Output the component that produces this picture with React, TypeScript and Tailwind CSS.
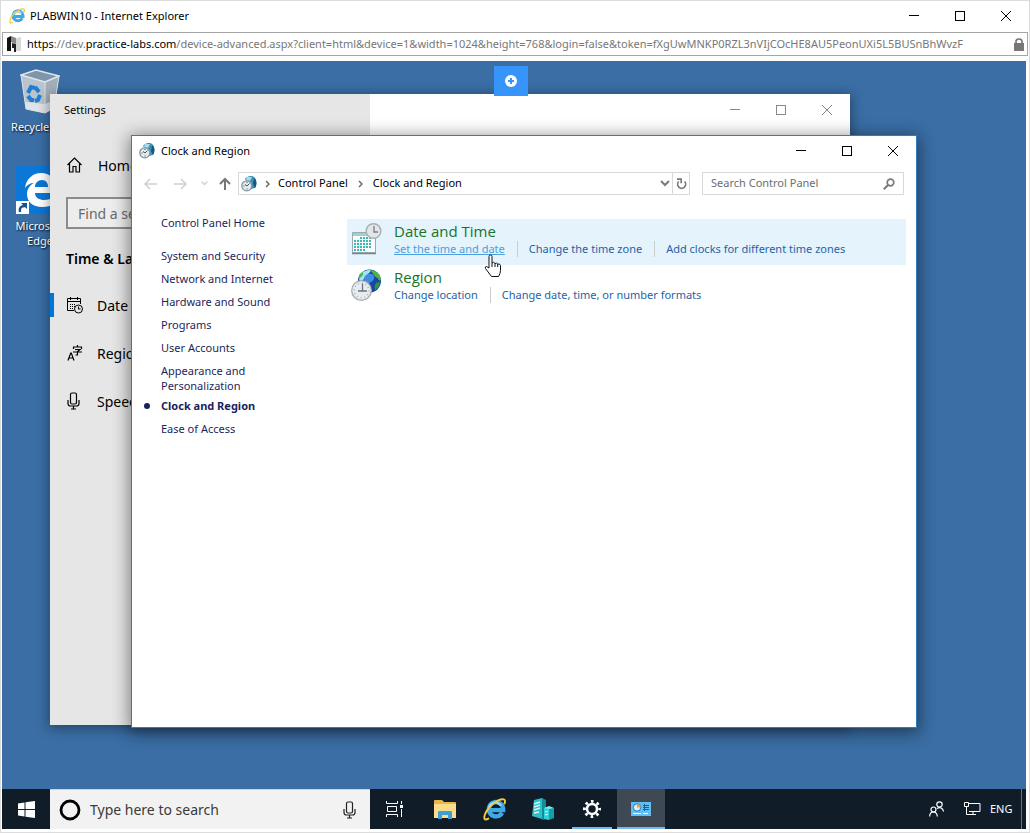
/**
 * Remote desktop session shown inside a browser window
 */

import type { ReactNode } from 'react'
import clsx from 'clsx'

function CaptionButtons({ className }: { className?: string }) {
  return (
    <div className={clsx('flex self-stretch', className)}>
      <button aria-label="Minimize" className="flex w-[46px] items-center justify-center">
        <svg width="10" height="10" shapeRendering="crispEdges" fill="none" stroke="currentColor">
          <path d="M0 4.500h10" />
        </svg>
      </button>
      <button aria-label="Maximize" className="flex w-[46px] items-center justify-center">
        <svg width="10" height="10" shapeRendering="crispEdges" fill="none" stroke="currentColor">
          <path d="M.5 .5h9v9h-9z" />
        </svg>
      </button>
      <button aria-label="Close" className="flex w-[46px] items-center justify-center">
        <svg width="10" height="10" fill="none" stroke="currentColor">
          <path d="M0 0l10 10M10 0L0 10" />
        </svg>
      </button>
    </div>
  )
}

function ExplorerLogo({ size }: { size: number }) {
  return (
    <svg width={size} height={size} viewBox="0 0 24 24" fill="none">
      <path d="M20 15.5a7.500 7.500 0 1 1 1-4.500v1.700H8" stroke="#3fa9e8" strokeWidth="4.500" />
      <path d="M6 9.500A7.500 7.500 0 0 1 19 8" stroke="#9adcf8" strokeWidth="2" />
      <path
        d="M5.500 21.500C.8 24.400 0 20 3.600 13.800 7.500 7.200 17 .2 21.600 1.400c1.700.5 1.700 2.400.8 4.400"
        stroke="#f3cb3c"
        strokeWidth="2"
        strokeLinecap="round"
      />
    </svg>
  )
}

function RecycleBin() {
  return (
    <svg width="40" height="46" viewBox="0 0 40 46" fill="none">
      <path d="M1 6l5 34 19 4 9-5 5-32z" fill="#b9c4cd" />
      <path d="M25 13l14-6-5 32-9 5z" fill="#a3b0bb" />
      <path d="M5 33l20 2 10-4-1 8-9 5-19-4z" fill="#dfe4e8" />
      <path d="M1 6L16 1l23 6-14 6z" fill="#7f96aa" stroke="#dfe6eb" strokeWidth="1.500" />
      <path d="M1 6l5 34 19 4V13M39 7l-5 32-9 5" stroke="#dbe2e8" />
      <g stroke="#1e7fd2" strokeWidth="4">
        <path d="M8 24l3-6 4 1" />
        <path d="M15 18l4 5" />
        <path d="M8 27l3 4h3" />
        <path d="M20 26l-2 5-3 1" />
      </g>
    </svg>
  )
}

function EdgeLogo() {
  return (
    <svg width="48" height="48" viewBox="0 0 48 48">
      <path fill="#0b78d7" d="M0 0h48v48H0z" />
      <path
        fill="#fff"
        d="M9 22C10 13 17 7 25 7c10 0 15 7 15 15v5H19c0 5 5 7 9 7 4 0 7-1 10-3v7c-3 2-7 3-12 3-9 0-15-5-15-13 0-5 3-9 7-11-4 0-7 2-9 5zm10-1h13c0-4-2-7-6-7s-7 3-7 7z"
      />
      <path fill="#fff" d="M0 35h13v13H0z" />
      <path fill="none" stroke="#1d4f96" strokeWidth="2.500" d="M4 46c-1-4 1-6 5-6" />
      <path fill="#1d4f96" d="M5 37h6v6z" />
    </svg>
  )
}

// Globe half hidden behind a clock face
function ClockGlobe() {
  return (
    <svg width="32" height="33" viewBox="0 0 32 33" fill="none">
      <circle cx="18.500" cy="12" r="11.500" fill="#1a46a0" />
      <path d="M8 8c2-5 6-7 11-7 2 1-1 3-3 5-2 1-3 6-6 6-2 0-2-2-2-4z" fill="#9fe3f8" />
      <path d="M14 7c3-3 8-3 9 0s-2 7-6 7c-3 0-5-4-3-7z" fill="#3f8be6" />
      <path d="M19 1c6 0 10 4 11 9-1 3-3 1-3-1-3 0-4-4-8-8zM8 6l4-3v3l-4 4z" fill="#4cb648" />
      <path d="M25 14c2-1 4-1 4 0-1 4-3 6-5 7-1-3 0-5 1-7z" fill="#2f9447" />
      <circle cx="10.500" cy="21.500" r="9.800" fill="#e9ecef" stroke="#a7aeb4" strokeWidth="1.300" />
      <circle cx="10.500" cy="21.500" r="7.300" stroke="#aab1b7" strokeWidth="1.500" strokeDasharray="1 2.822" />
      <path d="M11.500 14.500V22.500M7 22h9" stroke="#6a747c" strokeWidth="1.300" />
    </svg>
  )
}

// Small version used in the title and address bars
function ClockGlobeSmall() {
  return (
    <svg width="16" height="16" viewBox="0 0 16 16" fill="none">
      <path d="M4 3c2-3 7-4 9-2 3 2 3 8 1 11l-4 1z" fill="#3a93b5" />
      <path d="M6 1h5L9 5 5 4z" fill="#a9dcea" />
      <path d="M13 2c3 2 3 7 1 10l-2-4z" fill="#1f527e" />
      <circle cx="5.800" cy="9.800" r="5" fill="#e4eaed" stroke="#8496a0" strokeWidth="1.300" />
      <path d="M6 10l2.500-2.500M6 10L4 8.500M6 12.500v1M2.500 10h1M6 6v1" stroke="#44525c" />
    </svg>
  )
}

function CalendarClock() {
  return (
    <svg width="32" height="32" viewBox="0 0 32 32" fill="none">
      <path d="M1.500 9.500h23v20h-23z" fill="#fbfdfd" stroke="#9aabb0" />
      <path d="M2 10h22v3H2z" fill="#9fcfd2" />
      <path d="M1 30.500h24" stroke="#77888d" strokeWidth="1.500" />
      <path
        d="M9 15h12M3 18h18M3 21h18M3 24h18M3 27h12"
        stroke="#3cb9b3"
        strokeWidth="2"
        strokeDasharray="2 1"
      />
      <circle cx="22.500" cy="8" r="7.300" fill="#e3e6e9" stroke="#a9aeb3" strokeWidth="1.400" />
      <path d="M23 3v6h4" stroke="#7a838a" strokeWidth="1.400" />
    </svg>
  )
}

function Chevron() {
  return (
    <svg width="5" height="8" viewBox="0 0 5 8" fill="none" stroke="#6b6b6b" strokeWidth="1.500">
      <path d="M1 1l3 3-3 3" />
    </svg>
  )
}

function Microphone() {
  return (
    <svg width="13" height="18" viewBox="0 0 13 18" fill="none" stroke="currentColor" strokeWidth="1.200">
      <rect x="3.500" y="1" width="6" height="11" rx="1.500" />
      <path d="M1 8v3.500Q1 14 3.500 14h6Q12 14 12 11.500V8M6.500 14v3M4 17h5" />
    </svg>
  )
}

function DesktopIcon({ icon, label }: { icon: ReactNode; label: string }) {
  return (
    <button className="flex w-[76px] flex-col items-center text-[11px] leading-[15px] text-white [text-shadow:1px_1px_2px_#000]">
      {icon}
      <span className="mt-1 text-center">{label}</span>
    </button>
  )
}

const settingsItems = [
  {
    label: 'Date & time',
    active: true,
    icon: (
      <svg width="16" height="17" viewBox="0 0 16 17" fill="none" stroke="currentColor">
        <path d="M7 13.500H.5v-12h13V7M.5 4.500h13M3.500 0v3M10.500 0v3" />
        <path d="M3 7.500h6M3 9.500h5M3 11.500h4" strokeDasharray="1 1" />
        <circle cx="11.500" cy="12" r="4" />
        <path d="M11.500 9.500V12h2" />
      </svg>
    ),
  },
  {
    label: 'Region & language',
    active: false,
    icon: (
      <svg width="16" height="17" viewBox="0 0 16 17" fill="none" stroke="currentColor" strokeWidth="1.200">
        <path d="M1 15.500L3.700 8h.6L7 15.500M2 13h4" />
        <path d="M10.500 0v2M6.500 4V2h8v2M8 4.500h5l-2.500 2V10H8.500M6 7h9" />
      </svg>
    ),
  },
  { label: 'Speech', active: false, icon: <Microphone /> },
]

function SettingsWindow() {
  return (
    <section className="absolute top-[33px] left-12 flex h-[631px] w-[800px] bg-white shadow-[0_2px_12px_1px_rgba(0,0,0,0.4)]">
      <div className="w-80 shrink-0 bg-[#e6e6e6]">
        <h2 className="flex h-8 items-center pl-[14px]">Settings</h2>
        <a href="#home" className="mt-[15px] flex h-12 items-center gap-4 pl-[17px] text-[14px]">
          <svg width="15" height="16" viewBox="0 0 15 16" fill="none" stroke="currentColor" strokeWidth="1.200">
            <path d="M.5 8L7.500 1l7 7M2.500 6.500V15h3.500V9.500h3V15h3.500V6.500" />
          </svg>
          Home
        </a>
        <input
          aria-label="Find a setting"
          placeholder="Find a setting"
          className="mt-2 ml-4 block h-8 w-72 border-2 border-[#8c8c8c] bg-[#ededed] px-[10px] text-[14px] placeholder:text-[#6a6a6a]"
        />
        <h3 className="mt-[18px] pl-4 text-[14px] leading-6 font-semibold">Time &amp; Language</h3>
        <ul className="mt-[10px]">
          {settingsItems.map((item) => (
            <li key={item.label}>
              <a href="#setting" className="flex h-12 items-center text-[14px]">
                <span className={clsx('h-6 w-1', item.active && 'bg-[#0078d7]')} />
                <span className="flex w-[43px] items-center pl-[13px]">{item.icon}</span>
                {item.label}
              </a>
            </li>
          ))}
        </ul>
      </div>
      <div className="flex h-8 flex-1 justify-end">
        <CaptionButtons className="text-[#888]" />
      </div>
    </section>
  )
}

const categories = [
  'System and Security',
  'Network and Internet',
  'Hardware and Sound',
  'Programs',
  'User Accounts',
  'Appearance and Personalization',
]

const groups = [
  {
    title: 'Date and Time',
    icon: <CalendarClock />,
    links: ['Set the time and date', 'Change the time zone', 'Add clocks for different time zones'],
    hovered: true,
  },
  {
    title: 'Region',
    icon: <ClockGlobe />,
    links: ['Change location', 'Change date, time, or number formats'],
    hovered: false,
  },
]

function ControlPanelWindow() {
  return (
    <section className="absolute top-[74px] left-[129px] flex h-[593px] w-[786px] flex-col border border-[#2f7cc0] bg-white shadow-[0_3px_16px_2px_rgba(0,0,0,0.45)]">
      <div className="flex h-[30px] items-center pl-[7px]">
        <ClockGlobeSmall />
        <h2 className="flex-1 pl-[6px]">Clock and Region</h2>
        <CaptionButtons />
      </div>

      {/* Navigation bar */}
      <div className="mt-[6px] flex h-[23px] items-center px-3">
        <button aria-label="Back" className="flex w-[30px]">
          <svg width="13" height="12" viewBox="0 0 13 12" fill="none" stroke="#d0d0d0" strokeWidth="1.500">
            <path d="M13 6H1.500M6 1L1 6l5 5" />
          </svg>
        </button>
        <button aria-label="Forward" className="flex w-[27px]">
          <svg width="13" height="12" viewBox="0 0 13 12" fill="none" stroke="#d0d0d0" strokeWidth="1.500">
            <path d="M0 6h11.500M7 1l5 5-5 5" />
          </svg>
        </button>
        <button aria-label="Recent locations" className="flex w-[18px]">
          <svg width="7" height="5" viewBox="0 0 7 5" fill="none" stroke="#d0d0d0" strokeWidth="1.300">
            <path d="M.5 .5l3 3 3-3" />
          </svg>
        </button>
        <button aria-label="Up" className="flex w-[19px]">
          <svg width="12" height="13" viewBox="0 0 12 13" fill="none" stroke="#777" strokeWidth="2">
            <path d="M6 13V2M1 7l5-5 5 5" />
          </svg>
        </button>
        <div className="flex h-full flex-1 items-center border border-[#d9d9d9] pl-[2px]">
          <ClockGlobeSmall />
          <span className="w-[21px] pl-2"><Chevron /></span>
          <a href="#control-panel">Control Panel</a>
          <span className="w-[25px] pl-[10px]"><Chevron /></span>
          <a href="#clock-and-region" className="flex-1">Clock and Region</a>
          <button aria-label="Previous locations" className="w-3">
            <svg width="10" height="7" viewBox="0 0 10 7" fill="none" stroke="#7a7a7a" strokeWidth="2">
              <path d="M1 1l4 4 4-4" />
            </svg>
          </button>
          <button aria-label="Refresh" className="flex h-full w-[17px] items-center justify-center border-l border-[#d9d9d9]">
            <svg width="11" height="12" viewBox="0 0 11 12" fill="none" stroke="#7a7a7a" strokeWidth="1.700">
              <path d="M8.500 3.500A4 4 0 1 1 2.800 3.500M1 1.200h4.200v4" />
            </svg>
          </button>
        </div>
        <div className="ml-3 flex h-full w-[202px] items-center border border-[#d9d9d9] px-2">
          <input
            aria-label="Search Control Panel"
            placeholder="Search Control Panel"
            className="min-w-0 flex-1 placeholder:text-[#6d6d6d]"
          />
          <svg width="12" height="12" viewBox="0 0 12 12" fill="none" stroke="#7a7a7a" strokeWidth="1.700">
            <circle cx="7.500" cy="4.500" r="3.300" />
            <path d="M5 7L.8 11.200" strokeWidth="2" />
          </svg>
        </div>
      </div>

      <div className="flex pt-6">
        <nav className="-mt-1 w-[215px] shrink-0 pr-14 pl-[29px] leading-[15px] text-[#1b1f5e]">
          <a href="#home" className="block">Control Panel Home</a>
          <ul className="mt-[18px] flex flex-col gap-2">
            {categories.map((name) => (
              <li key={name}>
                <a href="#category" className="block">{name}</a>
              </li>
            ))}
          </ul>
          <ul className="mt-[5px] flex flex-col gap-2">
            <li className="-ml-[17px] flex items-center gap-[11px] font-bold">
              <span className="size-[6px] rounded-full bg-[#1b1f5e]" />
              Clock and Region
            </li>
            <li><a href="#category">Ease of Access</a></li>
          </ul>
        </nav>

        <div className="mr-[10px] flex-1">
          {groups.map((group) => (
            <div
              key={group.title}
              className={clsx('flex h-[46px] items-start gap-[11px] pt-[2px] pl-1', group.hovered && 'bg-[#e5f3fd]')}
            >
              <span className="pt-[2px]">{group.icon}</span>
              <div>
                <h3 className="font-['Open_Sans',sans-serif] text-[15px] leading-5 text-[#187324]">
                  <a href="#group">{group.title}</a>
                </h3>
                <ul className="flex leading-4 text-[#1d63a8]">
                  {group.links.map((link, i) => (
                    <li
                      key={link}
                      className={clsx(i > 0 && 'ml-3 border-l border-[#ccc] pl-[11px]')}
                    >
                      <a
                        href="#task"
                        className={clsx(group.hovered && i === 0 && 'text-[#4a9fe0] underline')}
                      >
                        {link}
                      </a>
                    </li>
                  ))}
                </ul>
              </div>
            </div>
          ))}
        </div>
      </div>
    </section>
  )
}

function TaskButton({ label, className, children }: { label: string; className?: string; children: ReactNode }) {
  return (
    <button aria-label={label} className={clsx('flex w-12 items-center justify-center', className)}>
      {children}
    </button>
  )
}

function Taskbar() {
  return (
    <footer className="flex h-10 bg-[#101c28] text-white">
      <TaskButton label="Start">
        <svg width="17" height="17" viewBox="0 0 17 17" fill="currentColor">
          <path d="M0 2.500l6.500-1V8H0zM7.500 1.300L17 0v8H7.500zM0 9h6.500v6.500l-6.500-1zM7.500 9H17v8l-9.500-1.300z" />
        </svg>
      </TaskButton>
      <div className="flex w-80 items-center border-t border-[#c8d4e2] bg-[#f2f2f2] pr-[14px] pl-[9px] text-[#222]">
        <svg width="22" height="22" viewBox="0 0 22 22" fill="none">
          <circle cx="11" cy="11" r="9" stroke="#000" strokeWidth="2.800" />
        </svg>
        <input
          aria-label="Type here to search"
          placeholder="Type here to search"
          className="ml-[9px] min-w-0 flex-1 text-[14px] placeholder:text-[#3a3a3a]"
        />
        <Microphone />
      </div>
      <div className="flex gap-px">
        <TaskButton label="Task View">
          <svg width="17" height="16" viewBox="0 0 17 16" fill="none" stroke="currentColor">
            <path d="M.5 0v2.500h11V0M.5 16v-2.500h11V16M1.500 5.500h9v5h-9zM15.500 0v3M15.500 8v8" />
            <path d="M14 4h3v3h-3z" fill="currentColor" stroke="none" />
          </svg>
        </TaskButton>
        <TaskButton label="File Explorer" className="ml-[2px]">
          <svg width="22" height="19" viewBox="0 0 22 19">
            <path fill="#e9b84a" d="M0 1q0-1 1-1h7l2 2h11q1 0 1 1v4H0z" />
            <path fill="#fbdc8c" d="M0 4h22v14H0z" />
            <path fill="#3d9fd3" d="M4 19v-7q0-1 1-1h12q1 0 1 1v7h-4v-4H8v4z" />
          </svg>
        </TaskButton>
        <TaskButton label="Internet Explorer"><ExplorerLogo size={23} /></TaskButton>
        <TaskButton label="Server Manager">
          <svg width="22" height="22" viewBox="0 0 22 22">
            <path fill="#2cc0ca" d="M2 2l8-2v21l-10-3z" />
            <path fill="#0f8e9a" d="M10 0l4 2v19l-4 1z" />
            <path stroke="#d5f8f9" strokeWidth="1.500" d="M2 6l6-2M2 9l6-2M2 12l6-2M2 15l5-1" />
            <path fill="#2fd0d8" d="M12 10l5-1v13l-5-1z" />
            <path fill="#12a0ab" d="M17 9l5 1v10l-5 2z" />
            <path fill="#7be8ea" d="M12 10l5-2 5 2-5 1z" />
            <path stroke="#d9f9fa" d="M13 14l3-1M13 17l3-1" />
          </svg>
        </TaskButton>
        <TaskButton label="Settings" className="relative">
          <svg width="18" height="18" viewBox="0 0 18 18" fill="none" stroke="currentColor">
            <circle cx="9" cy="9" r="5" strokeWidth="2.500" />
            <circle cx="9" cy="9" r="7.600" strokeWidth="2.800" strokeDasharray="2.600 3.369" strokeDashoffset="1.300" />
          </svg>
          <span className="absolute inset-x-1 bottom-0 h-[2px] bg-[#76b9ed]" />
        </TaskButton>
        <TaskButton label="Control Panel" className="border-b-2 border-[#76b9ed] bg-[#3f4954] pt-[2px]">
          <svg width="20" height="14" viewBox="0 0 20 14" fill="none">
            <path fill="#62bdf0" d="M0 0h20v14H0z" />
            <circle cx="6" cy="5.500" r="3.700" fill="#d9f0fc" stroke="#2277b8" />
            <path fill="#e6a23c" d="M6 5.500V2a3.500 3.500 0 0 1 3.500 3.500z" />
            <path stroke="#1563a5" d="M12 3.500h6M12 5.500h6M12 7.500h6M13.500 2v7" />
            <path stroke="#fff" d="M2 11.500h8M12 11.500h5" />
          </svg>
        </TaskButton>
      </div>

      {/* Notification area */}
      <div className="ml-auto flex items-center">
        <svg width="15" height="16" viewBox="0 0 15 16" fill="none" stroke="currentColor" strokeWidth="1.200">
          <circle cx="10.500" cy="3.500" r="2.700" />
          <circle cx="4.500" cy="8.500" r="2.500" />
          <path d="M.7 15.500c0-6 7.600-6 7.600 0M8 7.500c3-2 6-.5 6.500 3" />
        </svg>
        <svg className="ml-5" width="17" height="14" viewBox="0 0 17 14" fill="none" stroke="currentColor">
          <path d="M5 1.500h11v8H5M.5 .5h4v4h-4zM2.500 4.500v8H12M9 9.500v3" />
        </svg>
        <span className="ml-[9px] w-6">ENG</span>
      </div>
      <button aria-label="Show desktop" className="ml-[7px] w-[5px] border-l border-[#6c747c]" />
    </footer>
  )
}

export default function App() {
  return (
    <div className="flex min-h-screen flex-col overflow-hidden border border-[#dcdcdc] bg-white font-['Noto_Sans','Open_Sans',sans-serif] text-[11px] text-black">
      {/* Browser title and address bars */}
      <header className="flex h-[30px] items-center pl-2">
        <ExplorerLogo size={16} />
        <h1 className="flex-1 pl-[5px]">PLABWIN10 - Internet Explorer</h1>
        <CaptionButtons />
      </header>
      <div className="mx-px mt-px flex h-6 items-center border border-[#a6a6a6] pr-[3px] pl-1">
        <svg className="shrink-0" width="15" height="16" viewBox="0 0 15 16">
          <path fill="#111" d="M0 2l4-2v15H0z" />
          <path fill="#d8d8d8" d="M9 2l5-1v14H9z" />
          <path fill="#222" d="M5 7l4 1v8H7v-4H5z" />
          <path fill="#888" d="M4 0l5 2v6L4 6z" />
        </svg>
        <div
          role="textbox"
          aria-label="Address"
          className="ml-[5px] min-w-0 flex-1 overflow-hidden whitespace-nowrap text-[#777]"
        >
          <span className="text-black">https</span>://dev.
          <span className="text-black">practice-labs.com</span>
          /device-advanced.aspx?client=html&amp;device=1&amp;width=1024&amp;height=768&amp;login=false&amp;token=fXgUwMNKP0RZL3nVIjCOcHE8AU5PeonUXi5L5BUSnBhWvzF
        </div>
        <svg className="ml-[6px] shrink-0" width="10" height="13" viewBox="0 0 10 13" fill="#777">
          <path d="M0 5h10v8H0z" />
          <path d="M2 6V3.500Q2 1 5 1t3 2.500V6" fill="none" stroke="#777" strokeWidth="1.700" />
        </svg>
      </div>

      <div className="mt-[5px] mr-[3px] mb-[3px] ml-px flex flex-1 flex-col">
        <main className="relative flex-1 overflow-hidden bg-[#3a6ea5]">
          <div className="flex flex-col gap-8 pt-2">
            <DesktopIcon icon={<RecycleBin />} label="Recycle Bin" />
            <DesktopIcon icon={<EdgeLogo />} label="Microsoft Edge" />
          </div>

          <SettingsWindow />
          <ControlPanelWindow />

          {/* Session toolbar handle */}
          <button
            aria-label="Open session toolbar"
            className="absolute top-[5px] left-[492px] flex h-[30px] w-[34px] items-center justify-center bg-[#3694fa]"
          >
            <svg width="12" height="12" viewBox="0 0 12 12">
              <circle cx="6" cy="6" r="6" fill="#fff" />
              <path d="M6 3v6M3 6h6" stroke="#3694fa" strokeWidth="2" />
            </svg>
          </button>

          {/* Mouse pointer */}
          <svg className="absolute top-[193px] left-[482px]" width="18" height="24" viewBox="0 0 18 24">
            <path
              d="M5 14V2.500Q5 1 6.500 1T8 2.500V9q1.500-1.500 3 .5 1.500-1 2.700.5 2-.7 2.800 1.500v5q0 3-2 6H7.500L1.500 14.500Q.5 12.500 2.500 12.500z"
              fill="#fff"
              stroke="#111"
            />
            <path d="M8 9v4M11 9.500V13M13.700 10v3" stroke="#111" fill="none" />
          </svg>
        </main>
        <Taskbar />
      </div>
    </div>
  )
}
